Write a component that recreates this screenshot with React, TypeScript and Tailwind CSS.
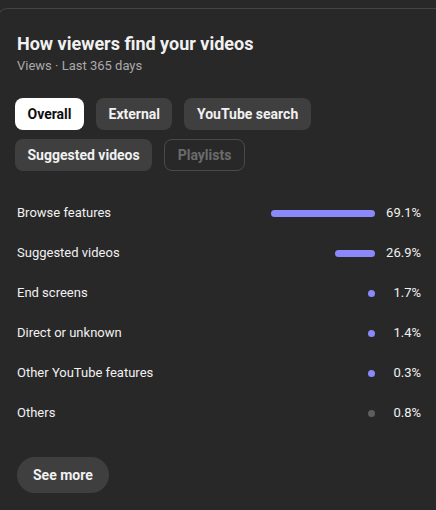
const filters = [
  { label: 'Overall', state: 'active' },
  { label: 'External', state: 'idle' },
  { label: 'YouTube search', state: 'idle' },
  { label: 'Suggested videos', state: 'idle' },
  { label: 'Playlists', state: 'disabled' },
]

const sources = [
  { label: 'Browse features', pct: 69.1, color: 'bg-[#8b89f9]' },
  { label: 'Suggested videos', pct: 26.9, color: 'bg-[#8b89f9]' },
  { label: 'End screens', pct: 1.7, color: 'bg-[#8b89f9]' },
  { label: 'Direct or unknown', pct: 1.4, color: 'bg-[#8b89f9]' },
  { label: 'Other YouTube features', pct: 0.3, color: 'bg-[#8b89f9]' },
  { label: 'Others', pct: 0.8, color: 'bg-[#5e5e5e]' },
]

export default function App() {
  return (
    <div
      className="w-[436px] h-[510px] overflow-hidden bg-[#282828] pt-2"
      style={{ fontFamily: 'Roboto, "Liberation Sans", sans-serif' }}
    >
      <div className="-ml-1 h-full rounded-tl-xl border-t border-l border-[#444444] pl-[20px] pr-[15px] pt-6">
        <h2 className="text-[18px] leading-[22px] font-bold text-[#f1f1f1]">How viewers find your videos</h2>
        <p className="mt-[1px] text-[13px] leading-[20px] text-[#aaaaaa]">Views · Last 365 days</p>

        <div className="mt-[22px] -ml-[2px] flex flex-wrap gap-x-3 gap-y-[9px]">
          {filters.map(f => (
            <button
              key={f.label}
              className={
                f.state === 'active'
                  ? 'h-8 rounded-lg bg-white px-[12.5px] text-[14px] font-bold text-[#0f0f0f]'
                  : f.state === 'disabled'
                    ? 'h-8 rounded-lg border border-[#4a4a4a] px-[12.5px] text-[14px] font-bold text-[#6b6b6b]'
                    : 'h-8 rounded-lg bg-[#3f3f3f] px-[12.5px] text-[14px] font-bold text-[#f1f1f1]'
              }
            >
              {f.label}
            </button>
          ))}
        </div>

        <div className="mt-[22px]">
          {sources.map(s => (
            <div key={s.label} className="flex h-10 items-center">
              <span className="flex-1 text-[13px] text-[#f1f1f1]">{s.label}</span>
              <div className="flex w-[150px] justify-end">
                <div
                  className={`h-[7px] rounded-full ${s.color}`}
                  style={{ width: Math.max(7, (s.pct / 100) * 150) }}
                />
              </div>
              <span className="w-[46px] text-right text-[13px] text-[#f1f1f1]">{s.pct.toFixed(1)}%</span>
            </div>
          ))}
        </div>

        <button className="mt-[24px] h-9 rounded-full bg-[#3f3f3f] px-4 text-[14px] font-bold text-[#f1f1f1]">
          See more
        </button>
      </div>
    </div>
  )
}
